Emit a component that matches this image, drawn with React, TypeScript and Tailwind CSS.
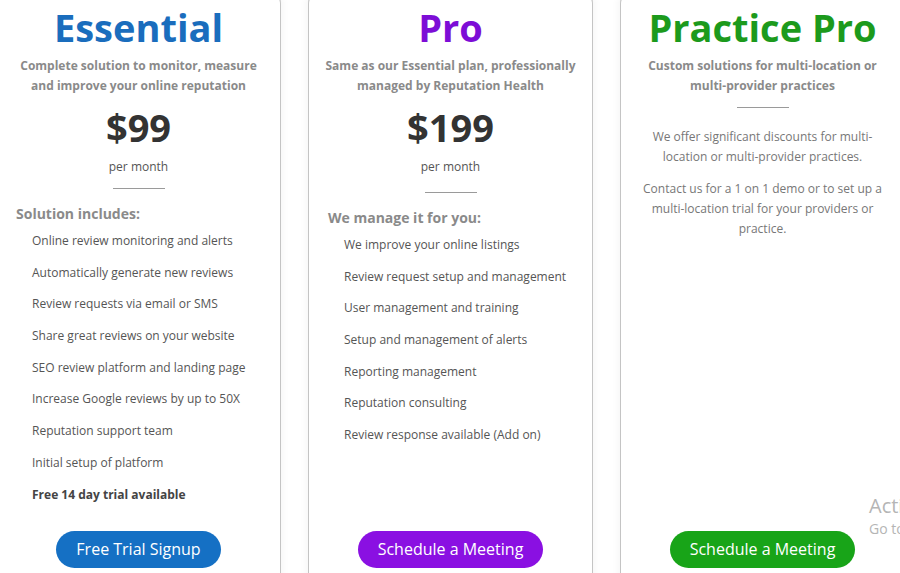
import React from 'react';

type Plan = {
  name: string;
  titleColor: string;
  topBorder: string;
  buttonColor: string;
  blurb: string[];
  price?: string;
  heading?: string;
  items?: string[];
  boldLast?: boolean;
  notes?: string[];
  cta: string;
  dividerGap: string;
};

const plans: Plan[] = [
  {
    name: 'Essential',
    titleColor: 'text-[#1a6dbd]',
    topBorder: 'border-t-[#1a6dbd]',
    buttonColor: 'bg-[#1570c4]',
    blurb: ['Complete solution to monitor, measure', 'and improve your online reputation'],
    price: '$99',
    heading: 'Solution includes:',
    items: [
      'Online review monitoring and alerts',
      'Automatically generate new reviews',
      'Review requests via email or SMS',
      'Share great reviews on your website',
      'SEO review platform and landing page',
      'Increase Google reviews by up to 50X',
      'Reputation support team',
      'Initial setup of platform',
      'Free 14 day trial available',
    ],
    boldLast: true,
    cta: 'Free Trial Signup',
    dividerGap: 'mt-[12px]',
  },
  {
    name: 'Pro',
    titleColor: 'text-[#7d0dd6]',
    topBorder: 'border-t-[#7d0dd6]',
    buttonColor: 'bg-[#8a10e2]',
    blurb: ['Same as our Essential plan, professionally', 'managed by Reputation Health'],
    price: '$199',
    heading: 'We manage it for you:',
    items: [
      'We improve your online listings',
      'Review request setup and management',
      'User management and training',
      'Setup and management of alerts',
      'Reporting management',
      'Reputation consulting',
      'Review response available (Add on)',
    ],
    cta: 'Schedule a Meeting',
    dividerGap: 'mt-[16px]',
  },
  {
    name: 'Practice Pro',
    titleColor: 'text-[#1c9a1c]',
    topBorder: 'border-t-[#1c9a1c]',
    buttonColor: 'bg-[#18a418]',
    blurb: ['Custom solutions for multi-location or', 'multi-provider practices'],
    notes: [
      'We offer significant discounts for multi-location or multi-provider practices.',
      'Contact us for a 1 on 1 demo or to set up a multi-location trial for your providers or practice.',
    ],
    cta: 'Schedule a Meeting',
    dividerGap: 'mt-[11px]',
  },
];

function PlanCard({ plan }: { plan: Plan }) {
  return (
    <div
      className={`flex h-[620px] w-[285px] shrink-0 flex-col rounded-t-[20px] border border-t-4 border-[#c4c4c4] bg-white px-3 pb-[35px] pt-[16px] shadow-[0_0_10px_rgba(0,0,0,0.06)] ${plan.topBorder}`}
    >
      <h2 className={`text-center text-[38px] font-bold leading-[46px] ${plan.titleColor}`}>{plan.name}</h2>
      <p className="mt-[6px] whitespace-nowrap text-center text-[12px] font-bold leading-[20px] text-[#8a8a8a]">
        {plan.blurb[0]}
        <br />
        {plan.blurb[1]}
      </p>

      {plan.price && (
        <>
          <p className="mt-[8px] text-center text-[38px] font-bold leading-[46px] text-[#333]">{plan.price}</p>
          <p className="mt-[8px] text-center text-[12px] leading-[18px] text-[#555]">per month</p>
        </>
      )}

      <div className={`mx-auto h-px w-[52px] shrink-0 bg-[#9a9a9a] ${plan.dividerGap}`} />

      {plan.heading && (
        <>
          <h3 className="mt-[15px] pl-[7px] text-[14px] font-bold leading-[20px] text-[#8a8a8a]">{plan.heading}</h3>
          <ul className="mt-[7px] flex flex-col gap-[11.7px] pl-[23px]">
            {plan.items?.map((item, i) => (
              <li
                key={item}
                className={`text-[12px] leading-[20px] ${
                  plan.boldLast && i === plan.items!.length - 1 ? 'font-bold text-[#444]' : 'text-[#555]'
                }`}
              >
                {item}
              </li>
            ))}
          </ul>
        </>
      )}

      {plan.notes && (
        <div className="mt-[19px] flex flex-col gap-[12px] px-1">
          {plan.notes.map((n) => (
            <p key={n} className="text-center text-[12px] leading-[20px] text-[#777]">
              {n}
            </p>
          ))}
        </div>
      )}

      <div className="flex-1" />
      <div className="flex justify-center">
        <button
          className={`h-[37px] rounded-full px-[20px] text-[16px] leading-[37px] text-white ${plan.buttonColor}`}
        >
          {plan.cta}
        </button>
      </div>
    </div>
  );
}

export default function App() {
  return (
    <div className="relative h-[573px] w-[900px] overflow-hidden bg-white" style={{ fontFamily: '"Open Sans", sans-serif' }}>
      <div className="-ml-[4px] -mt-[16px] flex gap-[27px]">
        {plans.map((p) => (
          <PlanCard key={p.name} plan={p} />
        ))}
      </div>
      <div className="pointer-events-none absolute left-[869px] top-[493px] whitespace-nowrap text-[#b5b5b5]">
        <p className="text-[20px] leading-[26px]">Activate Windows</p>
        <p className="text-[14px] leading-[20px]">Go to Settings to activate Windows.</p>
      </div>
    </div>
  );
}
